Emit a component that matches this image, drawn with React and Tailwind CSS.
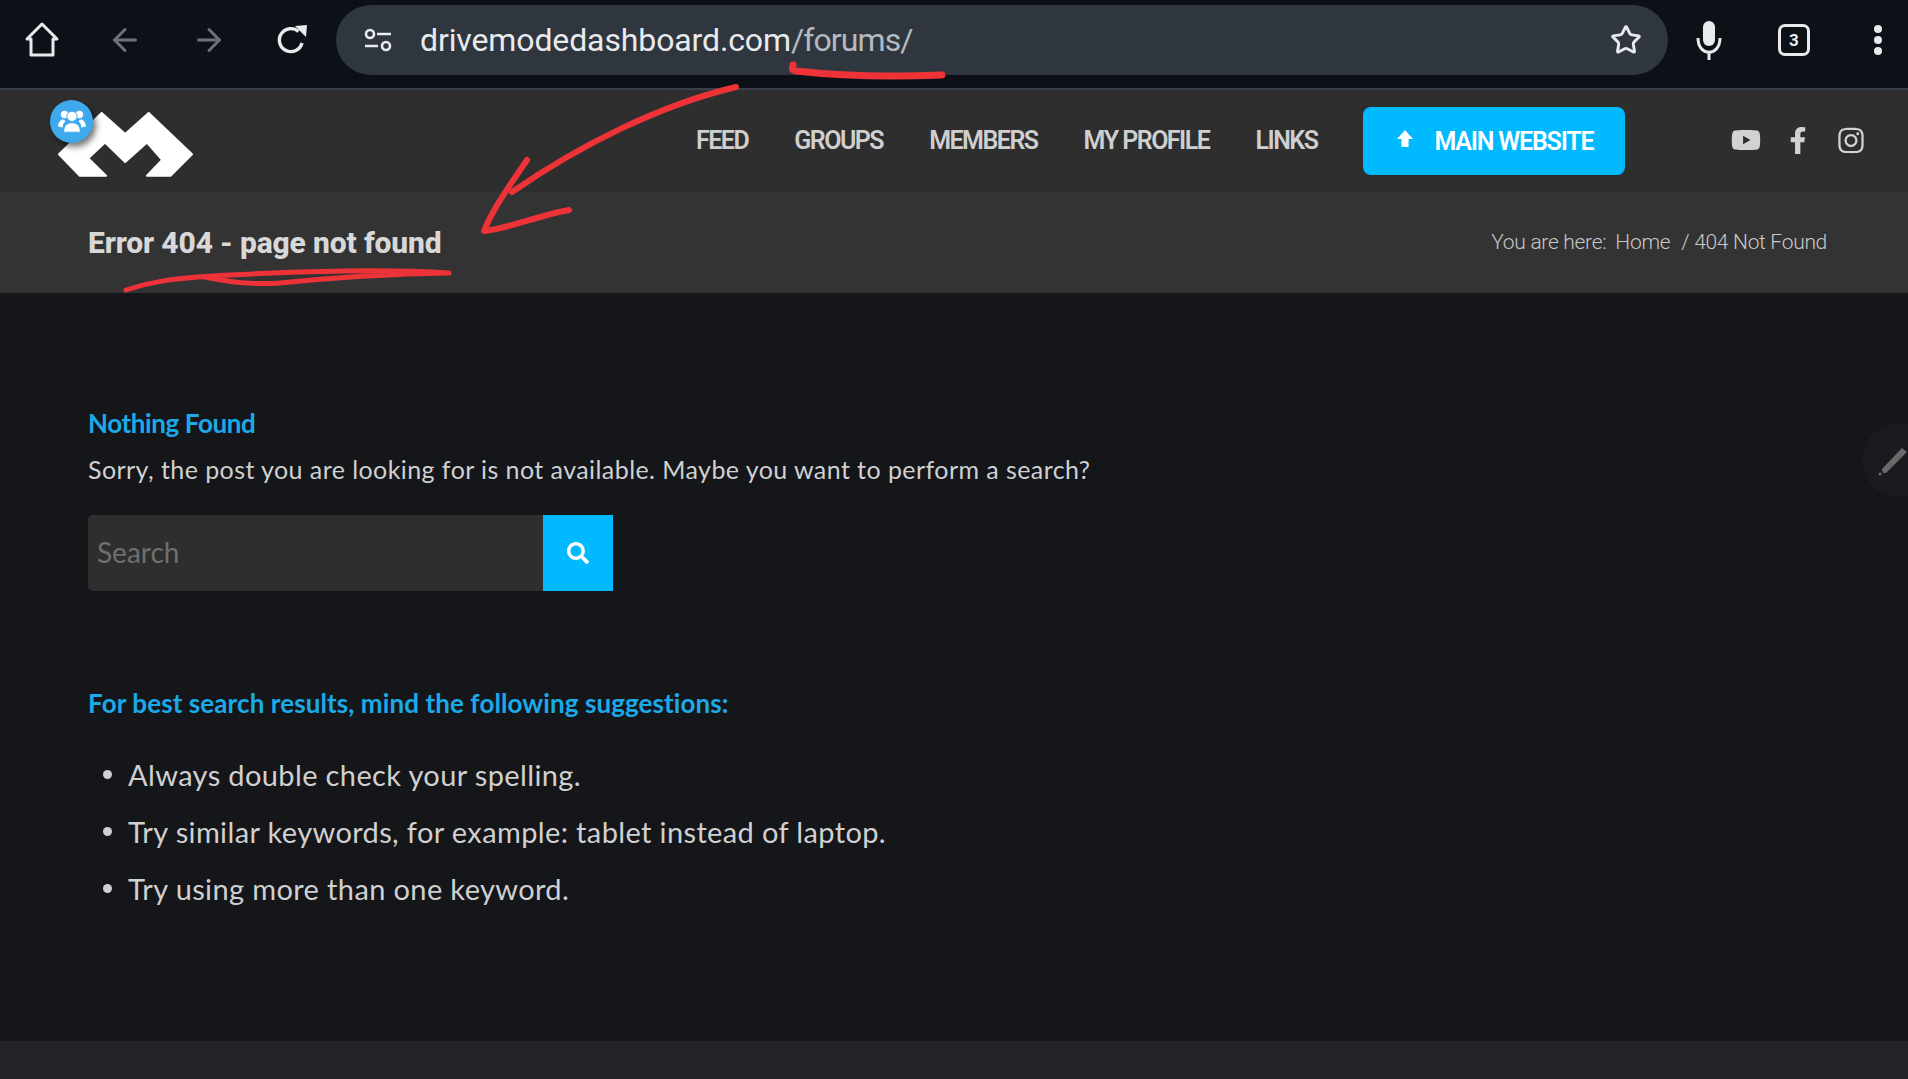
import { ArrowLeft, ArrowRight, Star } from 'lucide-react'
import { FaFacebookF, FaInstagram, FaSearch, FaYoutube } from 'react-icons/fa'

const navLinks = ['FEED', 'GROUPS', 'MEMBERS', 'MY PROFILE', 'LINKS']

const suggestions = [
  'Always double check your spelling.',
  'Try similar keywords, for example: tablet instead of laptop.',
  'Try using more than one keyword.',
]

function BrowserBar() {
  return (
    <div className="flex h-[90px] items-start border-b-2 border-[#3a4048] bg-[#0c1117] font-['Roboto',sans-serif]">
      <div className="flex h-[80px] w-[336px] items-center pl-[24px]">
        <svg viewBox="0 0 36 38" className="h-[38px] w-[36px]" fill="none" stroke="#e8eaed" strokeWidth="3" strokeLinejoin="round">
          <path d="M18 3 L33 18 H29 V34 H7 V18 H3 Z" />
        </svg>
        <ArrowLeft className="ml-[47px] h-[36px] w-[36px] text-[#6d7277]" strokeWidth={2} />
        <ArrowRight className="ml-[48px] h-[36px] w-[36px] text-[#6d7277]" strokeWidth={2} />
        <svg viewBox="0 0 32 32" className="ml-[49px] h-[32px] w-[32px]" fill="none" stroke="#e8eaed" strokeWidth="3.4">
          <path d="M26 19 A11.5 11.5 0 1 1 22.5 7.5" />
          <path d="M19 2 L31 1 L30 13 Z" fill="#e8eaed" stroke="none" />
        </svg>
      </div>
      <div className="mt-[5px] flex h-[70px] w-[1332px] items-center rounded-full bg-[#2f363e] pl-[27px] pr-[26px]">
        <svg viewBox="0 0 30 26" className="h-[26px] w-[30px]" fill="none" stroke="#e8eaed" strokeWidth="2.6">
          <circle cx="7" cy="7" r="4" />
          <path d="M14 7 H28 M2 19 H15" />
          <circle cx="23" cy="19" r="4" />
        </svg>
        <div className="ml-[27px] text-[32px] leading-none tracking-[-0.12px] text-[#e8eaed]">
          drivemodedashboard.com<span className="tracking-[-0.9px] text-[#b4bac0]">/forums/</span>
        </div>
        <Star className="ml-auto h-[32px] w-[32px] text-[#e8eaed]" strokeWidth={2.2} />
      </div>
      <div className="flex h-[80px] flex-1 items-center pl-[27px]">
        <svg viewBox="0 0 28 40" className="h-[40px] w-[28px]" fill="none" stroke="#e8eaed" strokeWidth="3">
          <rect x="8" y="1" width="12" height="25" rx="6" fill="#e8eaed" stroke="none" />
          <path d="M3 18 C3 37 25 37 25 18 M14 31 V40" />
        </svg>
        <div className="ml-[55px] flex h-[32px] w-[32px] items-center justify-center rounded-[7px] border-[3px] border-[#e8eaed] text-[17px] font-bold leading-none text-[#e8eaed]">
          3
        </div>
        <div className="ml-[64px] flex flex-col gap-[3px]">
          <span className="h-[8px] w-[8px] rounded-full bg-[#e8eaed]" />
          <span className="h-[8px] w-[8px] rounded-full bg-[#e8eaed]" />
          <span className="h-[8px] w-[8px] rounded-full bg-[#e8eaed]" />
        </div>
      </div>
    </div>
  )
}

function Logo() {
  return (
    <div className="relative mt-[6px] h-[65px] w-[135px]">
      <svg viewBox="85 70 402 192" className="h-[65px] w-[135px]" fill="#fff" stroke="#fff" strokeWidth="6" strokeLinejoin="round">
        <path d="M88 195 L215 72 L285 135 L355 72 L484 195 L420 259 L350 259 L395 212 L350 160 L285 218 L225 160 L175 207 L228 259 L150 259 Z" />
      </svg>
      <div className="absolute left-[-8px] top-[-12px] flex h-[43px] w-[43px] items-center justify-center rounded-full bg-[#3fa9ee] shadow-[3px_4px_6px_rgba(0,0,0,0.55)]">
        <svg viewBox="0 0 32 28" className="h-[26px] w-[30px]" fill="#fff">
          <circle cx="8" cy="7" r="4" />
          <circle cx="24" cy="7" r="4" />
          <path d="M1 20 C1 15 4 13 6 12 L9 14 C7 16 6 18 6 21 Z" />
          <path d="M31 20 C31 15 28 13 26 12 L23 14 C25 16 26 18 26 21 Z" />
          <circle cx="16" cy="9" r="5.5" stroke="#3fa9ee" strokeWidth="1" />
          <path d="M7 26 C7 19 11 16 16 16 C21 16 25 19 25 26 Z" stroke="#3fa9ee" strokeWidth="1" />
        </svg>
      </div>
    </div>
  )
}

function SiteNav() {
  return (
    <div className="flex h-[102px] items-center bg-[#2e2e2e] pl-[58px] font-['Roboto',sans-serif]">
      <Logo />
      <nav className="ml-[503px] flex items-center gap-[46px] pb-[2px] text-[25px] font-semibold leading-none tracking-[-1.5px] text-[#cfcfcf]">
        {navLinks.map((link) => (
          <a key={link}>{link}</a>
        ))}
      </nav>
      <a className="ml-[46px] flex h-[68px] w-[262px] items-center rounded-[8px] bg-[#00b9ff] pl-[34px] text-[25px] font-semibold leading-none tracking-[-1.2px] text-white">
        <svg viewBox="0 0 18 20" className="mb-[5px] h-[18px] w-[16px]" fill="#fff">
          <path d="M9 0 L18 10 H13 V19 H5 V10 H0 Z" />
        </svg>
        <span className="ml-[21px]">MAIN WEBSITE</span>
      </a>
      <div className="ml-[106px] flex items-center pb-[2px] text-[#d2d2d2]">
        <FaYoutube className="h-[30px] w-[30px]" />
        <FaFacebookF className="ml-[27px] h-[27px] w-[20px]" />
        <FaInstagram className="ml-[30px] h-[29px] w-[26px]" />
      </div>
    </div>
  )
}

function TitleBar() {
  return (
    <div className="flex h-[101px] items-center justify-between bg-[#333333] pl-[88px] pr-[81px] font-['Roboto',sans-serif]">
      <h1 className="text-[30px] font-extrabold leading-none tracking-[-0.15px] text-[#d8d8d8]">Error 404 - page not found</h1>
      <div className="text-[21px] font-light leading-none tracking-[-0.3px] text-[#c8c8c8]">
        You are here:<span className="ml-[9px]">Home</span><span className="ml-[11px]">/ 404 Not Found</span>
      </div>
    </div>
  )
}

function Annotations() {
  return (
    <svg className="pointer-events-none absolute left-0 top-0 h-[300px] w-[1000px]" viewBox="0 0 1000 300" fill="none" stroke="#ee3338" strokeLinecap="round" strokeLinejoin="round">
      <path d="M793 65 C792 70 792 70 796 71 C840 76 890 77 942 75" strokeWidth="7" />
      <path d="M736 87 C660 105 580 145 512 192" strokeWidth="6" />
      <path d="M527 160 C510 185 492 210 484 231 C510 228 540 215 569 210" strokeWidth="6" />
      <path d="M126 290 C150 282 170 278 230 275 C300 271 390 269 449 273 C380 274 320 279 280 283 C250 285 230 282 205 277" strokeWidth="5" />
    </svg>
  )
}

function Content() {
  return (
    <main className="relative flex-1 overflow-hidden bg-[#14161a] pl-[88px] pt-[115px] font-['Lato',sans-serif]">
      <h2 className="text-[26px] font-bold leading-[30px] tracking-[-0.4px] text-[#1ca9e8]">Nothing Found</h2>
      <p className="mt-[16px] text-[25px] leading-[30px] tracking-[0.43px] text-[#d0d0d0]">
        Sorry, the post you are looking for is not available. Maybe you want to perform a search?
      </p>
      <form className="mt-[31px] flex h-[76px] w-[525px]">
        <input
          placeholder="Search"
          className="h-full w-[455px] rounded-l-[5px] bg-[#2e2e2e] px-[9px] pb-[3px] text-[28px] text-[#d0d0d0] outline-none placeholder:text-[#6f6f6f]"
        />
        <button type="button" className="flex h-full w-[70px] items-center justify-center bg-[#00b9ff]">
          <FaSearch className="h-[22px] w-[22px] text-white" />
        </button>
      </form>
      <h3 className="mt-[97px] text-[26px] font-bold leading-[30px] tracking-[0.09px] text-[#1ca9e8]">
        For best search results, mind the following suggestions:
      </h3>
      <ul className="mt-[39px] flex flex-col gap-[22px] pl-[15px] text-[29px] leading-[35px] tracking-[0.37px] text-[#d0d0d0]">
        {suggestions.map((item) => (
          <li key={item} className="flex items-center">
            <span className="h-[9px] w-[9px] rounded-full bg-[#d0d0d0]" />
            <span className="ml-[16px]">{item}</span>
          </li>
        ))}
      </ul>
      <div className="absolute right-[-28px] top-[130px] flex h-[74px] w-[74px] items-center rounded-full bg-[#191b1f] pl-[16px]">
        <svg viewBox="0 0 32 32" className="h-[32px] w-[32px]" fill="#6a6a6a">
          <circle cx="2" cy="30" r="1.5" />
          <path d="M5 29 L4 25 L24 4 L29 8 L8 29 Z" />
        </svg>
      </div>
    </main>
  )
}

export default function App() {
  return (
    <div className="relative flex h-[1079px] flex-col overflow-hidden">
      <BrowserBar />
      <SiteNav />
      <TitleBar />
      <Content />
      <footer className="h-[38px] bg-[#232427]" />
      <Annotations />
    </div>
  )
}
